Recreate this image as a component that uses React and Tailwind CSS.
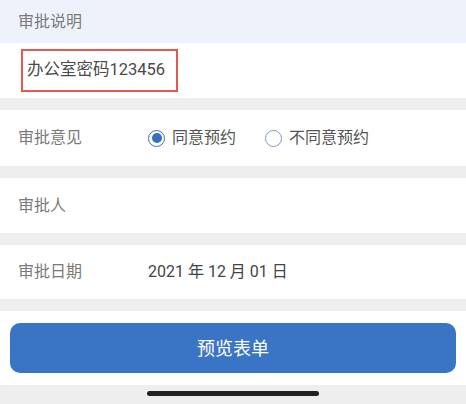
export default function App() {
  const font = { fontFamily: 'Roboto, "Noto Sans CJK SC", "Noto Sans", sans-serif' };
  return (
    <div className="w-[466px] h-[404px] bg-[#eeeeee] flex flex-col overflow-hidden" style={font}>
      <div className="h-[43px] bg-[#eef3fb] flex items-center px-[18px] text-[16px] text-[#7a7a7a]">审批说明</div>
      <div className="h-[55px] bg-white flex items-center pl-[21px]">
        <div className="w-[157px] h-[43px] border-2 border-solid border-[color:#e9564f] flex items-center pl-[4px] text-[16.5px] text-[#4a4a4a]">办公室密码123456</div>
      </div>
      <div className="h-[12px]" />
      <div className="h-[56px] bg-white flex items-center px-[18px] text-[16px]">
        <div className="w-[130px] text-[#7a7a7a]">审批意见</div>
        <div className="flex items-center gap-[7px] text-[#555]">
          <span className="w-[17px] h-[17px] rounded-full border-[1.5px] border-[#3a6fc0] flex items-center justify-center">
            <span className="w-[10px] h-[10px] rounded-full bg-[#3a6fc0]" />
          </span>
          <span>同意预约</span>
        </div>
        <div className="flex items-center gap-[7px] text-[#555] ml-[29px]">
          <span className="w-[17px] h-[17px] rounded-full border-[1.5px] border-[#7f98ba]" />
          <span>不同意预约</span>
        </div>
      </div>
      <div className="h-[12px]" />
      <div className="h-[55px] bg-white flex items-center px-[18px] text-[16px] text-[#7a7a7a]">审批人</div>
      <div className="h-[12px]" />
      <div className="h-[54px] bg-white flex items-center px-[18px] text-[16px]">
        <div className="w-[130px] text-[#7a7a7a]">审批日期</div>
        <div className="text-[#444]">2021 年 12 月 01 日</div>
      </div>
      <div className="h-[12px]" />
      <div className="h-[74px] bg-white px-[10px] pt-[12px]">
        <div className="h-[50px] rounded-[10px] bg-[#3a74c4] flex items-center justify-center text-white text-[18px]">预览表单</div>
      </div>
      <div className="flex-1 flex justify-center pt-[6px]">
        <div className="w-[172px] h-[5px] rounded-full bg-[#222]" />
      </div>
    </div>
  );
}
